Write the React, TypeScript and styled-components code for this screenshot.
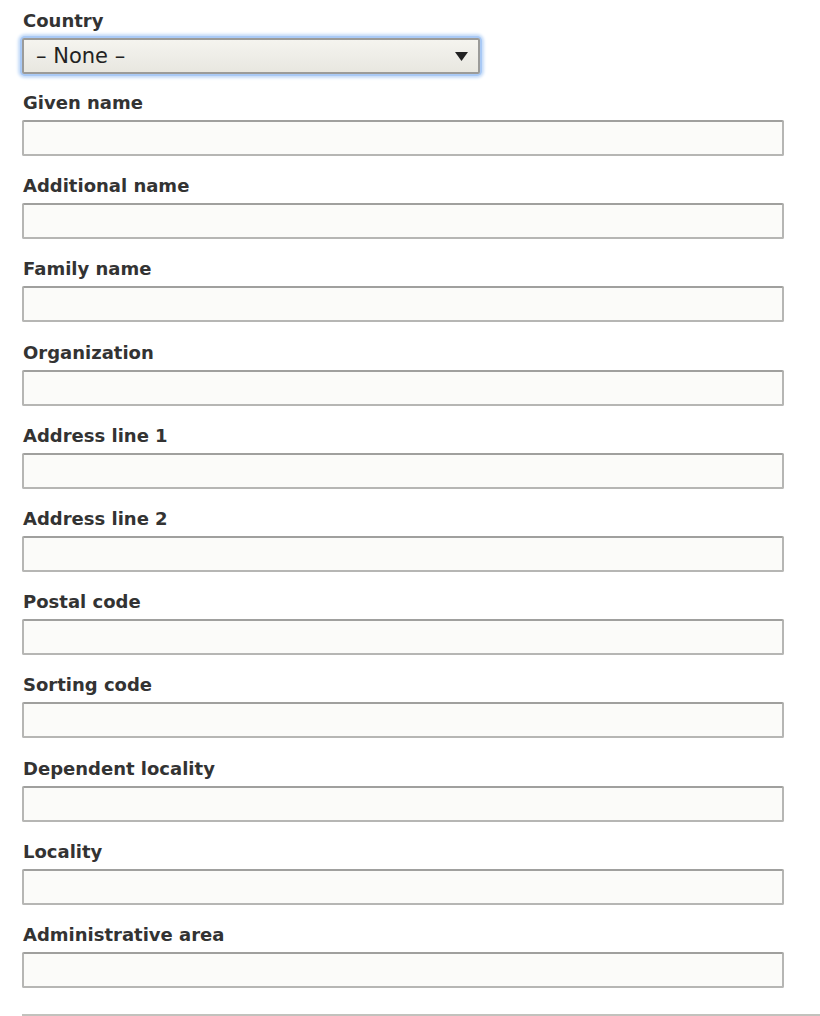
import React from "react";
import styled, { createGlobalStyle } from "styled-components";

const GlobalStyle = createGlobalStyle`
  html, body { margin: 0; padding: 0; background: #ffffff; }
  body { font-family: "DejaVu Sans", "Liberation Sans", sans-serif; color: #333333; }
`;

const Form = styled.form`
  padding: 10px 0 0 22px;
  width: 798px;
`;

const Field = styled.div<{ $gap?: number }>`
  display: flex;
  flex-direction: column;
  margin-bottom: ${(p) => (p.$gap ?? 19.2)}px;
`;

const Label = styled.label`
  font-family: "DejaVu Sans", "Liberation Sans", sans-serif;
  font-weight: bold;
  font-size: 18px;
  line-height: 22px;
  color: #333333;
  padding-left: 1px;
  margin-bottom: 6px;
`;

const TextInput = styled.input`
  box-sizing: border-box;
  width: 762px;
  height: 36px;
  margin: 0;
  padding: 4px 8px;
  border: 2px solid #b6b6b4;
  border-top-color: #a0a09e;
  border-radius: 2px;
  background: #fbfbf9;
  font-family: "DejaVu Sans", sans-serif;
  font-size: 18px;
  outline: none;
`;

const SelectWrap = styled.div`
  position: relative;
  width: 458px;
  height: 36px;
  border-radius: 3px;
  box-shadow: 0 0 0 2px #a9c9f5, 0 0 3px 4px #c6dcf8;
`;

const Select = styled.div`
  box-sizing: border-box;
  width: 100%;
  height: 100%;
  display: flex;
  align-items: center;
  justify-content: space-between;
  padding: 0 10px 0 12px;
  border: 2px solid #9b9b99;
  border-radius: 2px;
  background: linear-gradient(#f5f4ef, #e8e7e0);
  font-family: "DejaVu Sans", sans-serif;
  font-size: 21px;
  color: #222222;
`;

const Arrow = styled.svg`
  width: 13px;
  height: 9px;
  flex: none;
`;

const Rule = styled.hr`
  margin: 26px 0 0 0;
  border: none;
  height: 2px;
  background: #c2c2bd;
`;

const fields = [
  "Given name",
  "Additional name",
  "Family name",
  "Organization",
  "Address line 1",
  "Address line 2",
  "Postal code",
  "Sorting code",
  "Dependent locality",
  "Locality",
  "Administrative area",
];

export default function App() {
  return (
    <>
      <GlobalStyle />
      <Form>
        <Field $gap={18}>
          <Label>Country</Label>
          <SelectWrap>
            <Select>
              <span>– None –</span>
              <Arrow viewBox="0 0 13 9">
                <polygon points="0,0 13,0 6.5,9" fill="#222" />
              </Arrow>
            </Select>
          </SelectWrap>
        </Field>
        {fields.map((f) => (
          <Field key={f}>
            <Label>{f}</Label>
            <TextInput type="text" />
          </Field>
        ))}
        <Rule />
      </Form>
    </>
  );
}
